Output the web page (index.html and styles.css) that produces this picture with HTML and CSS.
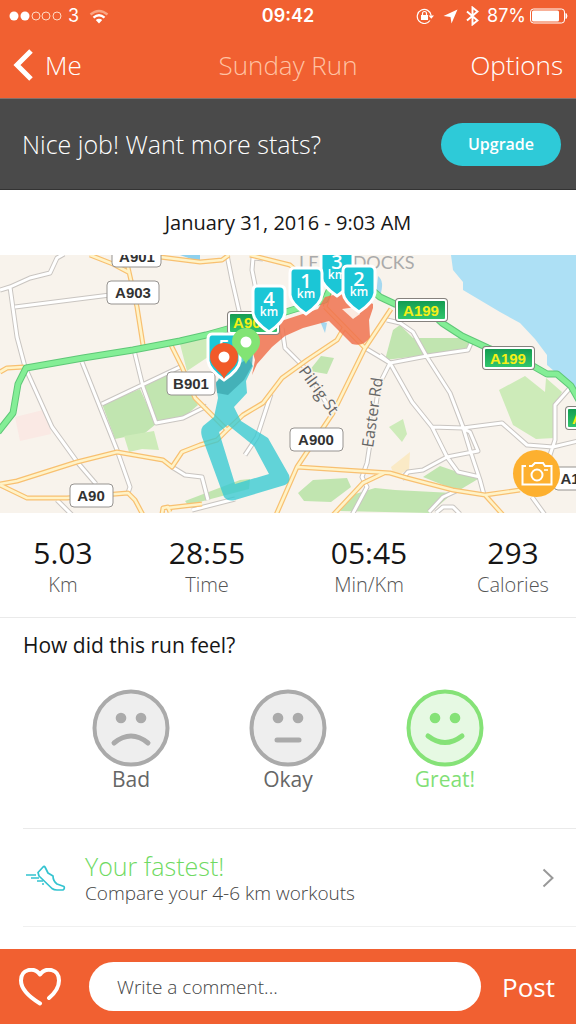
FILE: index.html
```html
<!DOCTYPE html>
<html lang="en">
<head>
<meta charset="utf-8">
<meta name="viewport" content="width=device-width, initial-scale=1">
<title>Sunday Run</title>
<link rel="stylesheet" href="styles.css">
</head>
<body>
<header class="top">
  <div class="status">
    <div class="status-side">
      <svg class="signal" width="54" height="12" viewBox="0 0 54 12" aria-hidden="true">
        <g fill="#fff"><circle cx="6" cy="6" r="4.5"/><circle cx="17" cy="6" r="4.5"/></g>
        <g fill="none" stroke="#ffd9c4"><circle cx="28" cy="6" r="4"/><circle cx="38" cy="6" r="4"/><circle cx="49" cy="6" r="4"/></g>
      </svg>
      <span>3</span>
      <svg width="20" height="15" viewBox="0 0 20 15" fill="none" stroke-width="2.4" aria-hidden="true">
        <path d="M1.500 5.500Q10-1.500 18.500 5.500" stroke="#f9a582"/>
        <path d="M4.500 8.700Q10 4 15.500 8.700" stroke="#fff"/>
        <path d="M6.800 11Q10 8.300 13.200 11L10 14.500z" fill="#fff"/>
      </svg>
    </div>
    <time class="clock">09:42</time>
    <div class="status-side status-right">
      <svg width="19" height="16" viewBox="0 0 19 16" fill="none" stroke="#fff" stroke-width="1.200" aria-hidden="true">
        <path d="M14 12.500A7 7 0 1 1 15.200 7.500"/><path d="M12.500 7.500h5.500l-2.700 3.200z" fill="#fff" stroke="none"/>
        <path d="M5 7h7v5H5z" fill="#fff" stroke="none"/><path d="M6.500 7V5.500a2 2 0 0 1 4 0V7"/>
      </svg>
      <svg width="15" height="15" viewBox="0 0 15 15" aria-hidden="true"><path d="M14.500.5L8.500 14.500 7.500 8 .5 7z" fill="#fff"/></svg>
      <svg width="13" height="20" viewBox="0 0 13 20" fill="none" stroke="#fff" stroke-width="1.900" aria-hidden="true"><path d="M1 5.500L11.500 14.500 6.500 18.500V1.500L11.500 5.500 1 14.500"/></svg>
      <span>87%</span>
      <svg width="38" height="16" viewBox="0 0 38 16" aria-hidden="true">
        <rect x=".5" y="1" width="34" height="14" rx="3" fill="none" stroke="#fff"/><rect x="2" y="2.500" width="27" height="11" rx="1.500" fill="#fff"/><path d="M36 5.500q2 2.500 0 5z" fill="#fff" stroke="#fff"/>
      </svg>
    </div>
  </div>
  <nav class="nav">
    <a class="back" href="#me">
      <svg width="20" height="32" viewBox="0 0 20 32" fill="none" stroke="#fff" stroke-width="5" aria-hidden="true"><path d="M18 2L4 16 18 30"/></svg>
      Me
    </a>
    <h1 class="title">Sunday Run</h1>
    <button class="options" type="button">Options</button>
  </nav>
</header>

<main>
  <section class="banner">
    <p class="banner-text">Nice job! Want more stats?</p>
    <button class="upgrade" type="button">Upgrade</button>
  </section>

  <time class="date" datetime="2016-01-31T09:03">January 31, 2016 - 9:03 AM</time>

  <section class="map" aria-label="Route map">
    <svg class="map-art" viewBox="0 255 576 258" role="img" aria-label="Map of the run">
      <defs>
        <linearGradient id="sign" x1="0" y1="0" x2="0" y2="1"><stop offset="0" stop-color="#129a50"/><stop offset="1" stop-color="#32c86e"/></linearGradient>
        <g id="white-roads">
          <path d="M0 290L10 287 30 278 50 273 57 258 64 254M10 287L17 337 25 367 52 427 78 463 96 484M15 307L110 295M82 362L117 450 130 487 128 493M102 404L180 367M134 350L143 387 156 423 183 418 207 406M172 467L185 475 202 477 208 500M192 510L235 499M57 500L72 515"/>
          <path d="M227 255L232 280 240 315M263 259L253 258 252 270 256 290M282 328L285 348 307 370 332 413M271 394L257 437 245 455M365 348L390 363 379 385 367 463 362 477 367 487 352 515"/>
          <path d="M380 355L390 363 412 402 432 427 447 457 458 472 480 477M387 320L400 323 413 332 427 357 450 393 463 427 470 450 480 480 484 495M390 363L427 356 468 350 472 341M432 427L463 428 502 423 527 445 553 447 578 441M447 457L423 470 408 472 402 479M447 457L478 451 470 432 462 428M570 388L555 405 555 440 549 458M532 497L545 515M429 512L443 497 456 491M436 513L443 507 453 507 460 514"/>
        </g>
        <g id="orange-roads">
          <path d="M0 484L17 481 77 462 117 452 163 460 172 467 182 452 200 445 217 440 227 430 243 415 263 403 282 378 307 360 337 340 344 328M0 485L27 498 67 498 128 493 135 500 143 515M127 263L137 307 143 345M171 345L182 367 195 398 227 430M90 255L113 264 130 273M160 257L200 262 222 260 229 255M250 255L290 265 299 273M0 372L7 368 24 367M162 514L163 508 168 507 170 512M167 508L202 504"/>
          <path d="M391 309L365 348 333 413 297 467 276 515M325 307L365 348M297 467L390 473 407 478 453 490 485 495 520 490M485 495L503 515M384 473L363 483 333 515M325 307L333 281"/>
        </g>
        <path id="trunk-roads" d="M-2 432L13 413 18 384 26 368 83 358 133 350 180 341 206 335 256 321 325 300 333 282M365 284L380 297 395 304 430 312 442 323 462 336 488 348 533 366 547 374 557 374 571 386 580 402"/>
        <path id="shield" d="M6 2H29Q34 2 34 7V29Q33 38 18 48 3 38 2 29V7Q2 2 6 2z" fill="#1bc6d6" stroke="#fff" stroke-width="3"/>
        <path id="pin" d="M14 36C11 28 0 24 0 14A14 14 0 0 1 28 14C28 24 17 28 14 36z"/>
      </defs>
      <rect y="255" width="576" height="258" fill="#f8f3ec"/>
      <path d="M451 255L453 270 463 282 463 290 500 312 520 323 535 339 547 355 547 365 576 390V255z" fill="#ade0f5"/>
      <path d="M180 255H200V262z" fill="#8fd1ee"/>
      <g fill="#c1e5b0">
        <path d="M102 404L140 389 156 424 145 433 115 439zM144 386L176 371 198 405 184 417 157 421z"/>
        <path d="M385 360L393 330 400 325 413 338 471 338 469 349 427 355z"/>
        <path d="M298 493L313 480 347 478 351 487 331 502 304 501zM340 511L352 495 375 488 395 490 453 493 430 513zM423 477L440 466 478 479 458 491zM309 371L321 356 334 358 327 374zM185 501L240 480 250 479 249 489 188 505z"/>
      </g>
      <g fill="#cdebb9"><path d="M499 390L525 376 545 392 546 378 562 392 555 407 555 438 536 439 513 425z"/><path d="M124 436L154 431 159 450 142 449 129 452zM180 344L207 337 211 355 187 371zM389 427L403 419 407 434 402 442z"/></g>
      <path d="M15 417L47 409 51 434 20 441z" fill="#fae9e4"/>
      <path d="M391 467L410 452 409 470 394 476z" fill="#faeac6"/>
      <path d="M320 321L327 323 325 333zM378 276q7 5 2 20h-4zM320 255H345L340 263 332 259z" fill="#a5d8f0"/>
      <g fill="none" stroke-linejoin="round">
        <use href="#white-roads" stroke="#c9c5c1" stroke-width="5"/><use href="#white-roads" stroke="#fff" stroke-width="3"/>
        <use href="#orange-roads" stroke="#f8c071" stroke-width="5"/><use href="#orange-roads" stroke="#fff3c8" stroke-width="2.600"/>
        <use href="#trunk-roads" stroke="#5fc777" stroke-width="7"/><use href="#trunk-roads" stroke="#84ee96" stroke-width="5"/>
      </g>
      <text class="place" x="299" y="269">LEITH DOCKS</text>
      <path d="M252 375L255 360 249 340 275 323 318 309 325 297 350 291 373 304 373 308 369 320 370 337Q364 347 352 344L329 321 303 328 285 336 272 347 257 364z" fill="#f0714d" opacity=".84"/>
      <path d="M342 309L353 319 360 314 356 307z" fill="#fbe9e0"/>
      <path d="M216 384L218 398 214 417 203 426Q200 430 202 437L224 497Q228 502 235 500L285 485Q291 482 289 475L268 438 241 421 234 407 247 393 246 381 253 366 246 354 228 360zM219 432L228 425 254 446 269 474 235 484z" fill="#36c9d2" fill-rule="evenodd" opacity=".78"/>
      <path d="M216 382L253 354 252 366 244 380 228 395 217 393z" fill="#3ba5ae" opacity=".75"/>
      <text class="street" transform="translate(298 371) rotate(54)">Pilrig St</text>
      <text class="street" transform="translate(373 448) rotate(-82)">Easter Rd</text>
      <g class="road-label">
        <g fill="#fff" stroke="#969390"><rect x="112" y="244" width="49" height="23" rx="4"/><rect x="107" y="281" width="52" height="23" rx="4"/><rect x="167" y="372" width="48" height="23" rx="4"/><rect x="290" y="428" width="53" height="23" rx="4"/><rect x="70" y="484" width="43" height="23" rx="4"/><rect x="554" y="467" width="53" height="23" rx="4"/></g>
        <text x="137" y="262">A901</text><text x="133" y="298">A903</text><text x="191" y="389">B901</text><text x="316" y="445">A900</text><text x="91" y="501">A90</text><text x="570" y="484">A1</text>
      </g>
      <g class="road-label trunk">
        <g fill="url(#sign)"><g stroke="#85817d" stroke-width="4"><rect x="397" y="300" width="49" height="20" rx="2"/><rect x="484" y="348" width="49" height="20" rx="2"/><rect x="567" y="408" width="49" height="20" rx="2"/><rect x="229" y="313" width="49" height="20" rx="2"/></g><g stroke="#fff" stroke-width="2"><rect x="397" y="300" width="49" height="20" rx="2"/><rect x="484" y="348" width="49" height="20" rx="2"/><rect x="567" y="408" width="49" height="20" rx="2"/><rect x="229" y="313" width="49" height="20" rx="2"/></g></g>
        <text x="421" y="316">A199</text><text x="508" y="364">A199</text><text x="590" y="424">A199</text><text x="251" y="328">A902</text>
      </g>
      <g class="marker">
        <g transform="translate(319 248)"><use href="#shield"/><text x="18" y="21">3</text><text class="unit" x="18" y="31">km</text></g>
        <g transform="translate(251 284)"><use href="#shield"/><text x="18" y="22">4</text><text class="unit" x="18" y="32">km</text></g>
        <g transform="translate(288 266)"><use href="#shield"/><text x="18" y="22">1</text><text class="unit" x="18" y="32">km</text></g>
        <g transform="translate(341 264)"><use href="#shield"/><text x="18" y="22">2</text><text class="unit" x="18" y="32">km</text></g>
        <g transform="translate(206 332)"><use href="#shield"/><text x="18" y="22">5</text></g>
      </g>
      <use href="#pin" x="232" y="328" fill="#82e474"/><circle cx="246" cy="342" r="5.500" fill="#fff"/>
      <use href="#pin" x="210" y="343" fill="#f15a29"/><circle cx="224" cy="357" r="5.500" fill="#fff"/>
    </svg>
    <button class="camera" type="button" aria-label="Add photo">
      <svg width="32" height="26" viewBox="0 0 32 26" fill="none" stroke="#fff" stroke-width="2" aria-hidden="true"><path d="M5 5H1.500V23.500H30.500V5H27L24 5 22 2H14L11 5H8"/><circle cx="16" cy="14" r="5.500"/><path d="M23 9h4" stroke-width="1.500"/></svg>
    </button>
  </section>

  <dl class="stats">
    <div class="stat"><dt>Km</dt><dd>5.03</dd></div>
    <div class="stat"><dt>Time</dt><dd>28:55</dd></div>
    <div class="stat"><dt>Min/Km</dt><dd>05:45</dd></div>
    <div class="stat"><dt>Calories</dt><dd>293</dd></div>
  </dl>

  <section class="feel">
    <h2 class="feel-title">How did this run feel?</h2>
    <div class="faces">
      <button class="face" type="button">
        <svg width="78" height="78" viewBox="0 0 78 78" aria-hidden="true"><circle cx="39" cy="39" r="36.500" fill="#eee" stroke="#aaa" stroke-width="4"/><g fill="#aaa"><circle cx="29" cy="29" r="5.300"/><circle cx="49" cy="29" r="5.300"/></g><path d="M22 54Q39 40 56 54" fill="none" stroke="#aaa" stroke-width="5" stroke-linecap="round"/></svg>
        Bad
      </button>
      <button class="face" type="button">
        <svg width="78" height="78" viewBox="0 0 78 78" aria-hidden="true"><circle cx="39" cy="39" r="36.500" fill="#eee" stroke="#aaa" stroke-width="4"/><g fill="#aaa"><circle cx="29" cy="29" r="5.300"/><circle cx="49" cy="29" r="5.300"/></g><path d="M28 51H50" stroke="#aaa" stroke-width="5" stroke-linecap="round"/></svg>
        Okay
      </button>
      <button class="face selected" type="button" aria-pressed="true">
        <svg width="78" height="78" viewBox="0 0 78 78" aria-hidden="true"><circle cx="39" cy="39" r="36.500" fill="#e6f9e3" stroke="#85e277" stroke-width="4"/><g fill="#85e277"><circle cx="29" cy="29" r="5.300"/><circle cx="49" cy="29" r="5.300"/></g><path d="M22 47Q39 60 56 47" fill="none" stroke="#85e277" stroke-width="5" stroke-linecap="round"/></svg>
        Great!
      </button>
    </div>
  </section>

  <a class="fastest" href="#compare">
    <svg width="40" height="26" viewBox="0 0 40 26" fill="none" stroke="#33c3d0" stroke-width="1.700" stroke-linejoin="round" aria-hidden="true"><path d="M17.500 1.500L12 7.500 13 11 26 23.500Q28 25 31 25H37Q39 24 38 21.500L31 19Q27 16 27 11L22 8 19 2Q18 1 17.500 1.500z"/><path d="M0 10H10M5 13H13M11 16H17M16 19H18"/></svg>
    <span class="fastest-text"><strong>Your fastest!</strong><span>Compare your 4-6 km workouts</span></span>
    <svg width="12" height="20" viewBox="0 0 12 20" fill="none" stroke="#999" stroke-width="2" aria-hidden="true"><path d="M1.500 1.500L10.500 10 1.500 18.500"/></svg>
  </a>
</main>

<form class="composer">
  <button class="like" type="button" aria-label="Like"><svg width="42" height="38" viewBox="0 0 42 38" fill="none" stroke="#fff" stroke-width="4" stroke-linecap="round" stroke-linejoin="round" aria-hidden="true"><path d="M21 35.500C12 30 2 22 2 12.500C2 1 15-1.500 21 6.500C27-1.500 40 1 40 12.500C40 19 36 25 30 30"/></svg></button>
  <input class="comment" type="text" placeholder="Write a comment..." aria-label="Comment">
  <button class="post" type="submit">Post</button>
</form>
</body>
</html>
```

FILE: styles.css
```css
* { box-sizing: border-box; }

body {
  margin: 0;
  min-height: 100vh;
  display: flex;
  flex-direction: column;
  background: #fff;
  color: #161616;
  font-family: "Open Sans", "Noto Sans", sans-serif;
}

button {
  padding: 0;
  border: 0;
  background: none;
  color: inherit;
  font: inherit;
  cursor: pointer;
}

a { color: inherit; text-decoration: none; }
svg { display: block; flex: none; }

.top {
  background: #f16031;
  color: #fff;
  border-bottom: 1px solid #85706a;
}

.status {
  display: grid;
  grid-template-columns: 1fr auto 1fr;
  align-items: center;
  height: 32px;
  padding: 0 8px;
  font: 18px/32px Inter, sans-serif;
}

.status-side { display: flex; align-items: center; gap: 6px; }
.status-side svg:last-child { margin-left: 4px; }
.status-right { justify-content: flex-end; gap: 8px; }
.status-right svg:last-child { margin-left: -4px; }
.clock { font-weight: 600; }

.nav {
  display: grid;
  grid-template-columns: 1fr auto 1fr;
  align-items: center;
  height: 66px;
  padding: 0 13px;
  font-size: 26px;
  font-weight: 300;
  line-height: 32px;
}

.back { display: flex; align-items: center; gap: 12px; }
.title { margin: 0; font-size: 26px; font-weight: 300; color: #ffc3a4; }
.options { justify-self: end; }

.banner {
  display: flex;
  align-items: center;
  justify-content: space-between;
  min-height: 91px;
  padding: 0 15px 0 22px;
  background: #4a4a4a;
  color: #fff;
  border-bottom: 1px solid #333;
}

.banner-text { margin: 0; font-size: 25px; font-weight: 300; }

.upgrade {
  padding: 0 27px;
  border-radius: 22px;
  background: #2ecad8;
  font-size: 16px;
  font-weight: 600;
  line-height: 43px;
}

.date {
  display: block;
  text-align: center;
  font-size: 20px;
  line-height: 65px;
}

.map { position: relative; }
.map-art { width: 100%; height: auto; }
.place { font: 18px Lato, sans-serif; fill: #aaa; stroke: #f8f3ec; stroke-width: 3px; paint-order: stroke; }
.street { font: 16px "Open Sans", sans-serif; fill: #666; stroke: #f8f3ec; stroke-width: 3px; paint-order: stroke; }
.road-label { font: 700 15px "Liberation Sans", sans-serif; text-anchor: middle; }
.road-label text { fill: #333; }
.road-label.trunk text { fill: #f5ef17; }
.marker { font: 600 20px "Open Sans", sans-serif; text-anchor: middle; }
.marker text { fill: #fff; }
.marker .unit { font-size: 12px; }

.camera {
  position: absolute;
  right: 16px;
  bottom: 16px;
  width: 47px;
  height: 47px;
  border-radius: 50%;
  display: grid;
  place-items: center;
  background: #fdb02f;
}

.stats {
  display: grid;
  grid-template-columns: 7fr 9fr 9fr 7fr;
  margin: 0;
  padding: 20px 0;
  border-bottom: 1px solid #eaeaea;
}

.stat { display: flex; flex-direction: column-reverse; text-align: center; }
.stat dt { font-size: 20px; font-weight: 300; line-height: 24px; color: #555; }
.stat dd { margin: 0; font-size: 30px; line-height: 40px; }

.feel { margin-left: 23px; padding-bottom: 36px; border-bottom: 1px solid #eaeaea; }
.feel-title { margin: 0; font-size: 21px; font-weight: 400; line-height: 54px; }
.faces { display: flex; justify-content: space-between; padding: 17px 92px 0 69px; }

.face {
  display: flex;
  flex-direction: column;
  align-items: center;
  width: 78px;
  font-size: 21px;
  line-height: 25px;
  color: #666;
}

.face.selected { color: #82df76; }

.fastest {
  display: flex;
  align-items: center;
  gap: 19px;
  min-height: 98px;
  margin-left: 23px;
  padding: 0 22px 0 3px;
  border-bottom: 1px solid #f0f0f0;
}

.fastest-text { flex: 1; display: flex; flex-direction: column; font-size: 19px; font-weight: 300; line-height: 24px; color: #444; }
.fastest strong { font-size: 25px; font-weight: 300; line-height: 30px; color: #6fda62; }

.composer {
  display: flex;
  align-items: center;
  min-height: 75px;
  margin-top: auto;
  padding: 0 21px 0 19px;
  background: #f16031;
  color: #fff;
}

.comment {
  flex: 1;
  min-width: 0;
  height: 49px;
  margin: 0 21px 0 28px;
  padding: 0 28px;
  border: 0;
  border-radius: 25px;
  background: #fff;
  color: #333;
  font: 300 19px "Open Sans", sans-serif;
}

.comment::placeholder { color: #444; opacity: 1; }
.post { font-size: 26px; line-height: 32px; }
```
